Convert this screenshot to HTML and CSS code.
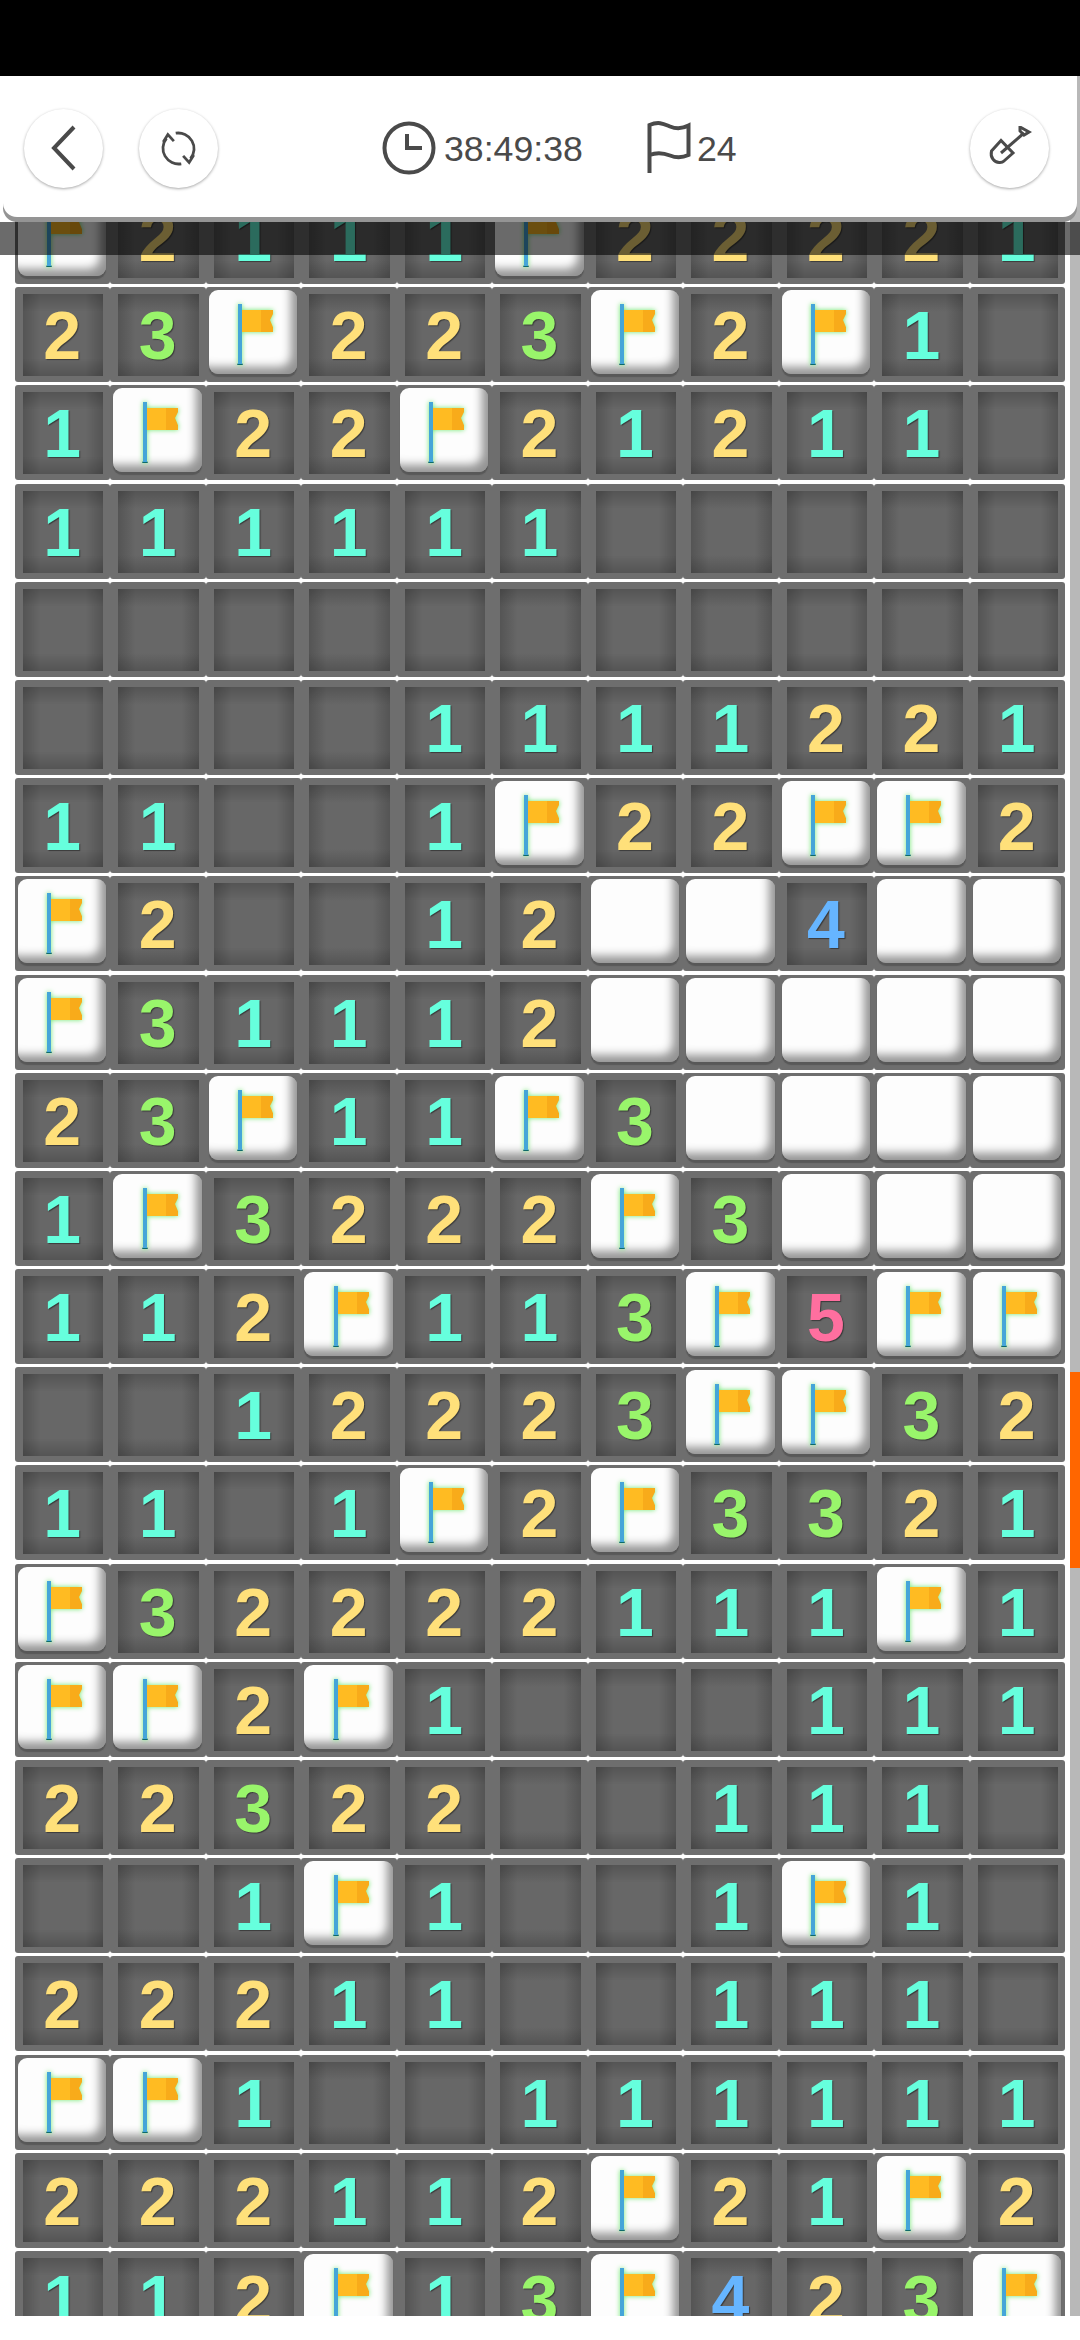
FILE: index.html
```html
<!DOCTYPE html>
<html lang="en">
<head>
  <meta charset="UTF-8" />
  <meta name="viewport" content="width=device-width, initial-scale=1.0"/>
  <title>Minesweeper</title>
  <link rel="stylesheet" href="styles.css">
</head>
<body>
  <svg class="defs" width="0" height="0">
    <symbol id="flag" viewBox="0 0 40 64">
      <path d="M4 62 L6 58 L8 58 L10 62 Z" fill="#0d6a6a"/>
      <rect x="5" y="1" width="4" height="60" fill="#45a5d8"/>
      <path d="M9 7 H30 V29 H9 Z" fill="#ffbb22"/>
      <path d="M29 7 H43 L38 17 L43 29 H29 Z" fill="#f8ab1a" transform="translate(-1 0)"/>
    </symbol>
  </svg>

  <div class="status-bar"></div>

  <main class="viewport">
    <header class="topbar">
      <button class="round-btn">
        <svg width="28" height="48" viewBox="0 0 28 48"><path d="M24 3 L4 24 L24 45"/></svg>
      </button>
      <button class="round-btn">
        <svg class="thin" width="37" height="37" viewBox="0 0 40 40">
          <path d="M17 3.5 A17 17 0 0 1 33 31"/><path d="M25 28 L31.5 35 L36.5 27"/>
          <path d="M23 36.5 A17 17 0 0 1 7 9"/><path d="M15 12 L8.5 5 L3.5 13"/>
        </svg>
      </button>
      <div class="stats">
        <svg width="54" height="54" viewBox="0 0 54 54"><circle cx="27" cy="27" r="24.5"/><path d="M25 13 V27 H40"/></svg>
        <span class="stat-text">38:49:38</span>
        <svg class="stat-flag" width="44" height="54" viewBox="0 0 44 54"><path d="M2.500 52 V4 C12 0 17 3 23 5.500 S35 8 41.500 4.500 V34 C35 37 29 37 23 34.500 S10 31 2.500 34"/></svg>
        <span class="stat-text flag-count">24</span>
      </div>
      <button class="round-btn tool">
        <svg class="thin" width="44" height="44" viewBox="0 0 44 44">
          <path d="M36 7 L13 27"/>
          <path d="M32 1 L41 6 L36 9 L32 5 Z"/>
          <path d="M13 14.500 L3.500 25 C2 31 6 37 12 36.500 C14 36.500 15 36 16 35 L25 27 Z"/>
        </svg>
      </button>
    </header>

    <div class="scrollbar"><div class="thumb"></div></div>

    <section class="board">
      <div class="cell closed"><div class="cap"><svg class="flag"><use href="#flag"/></svg></div></div><div class="cell n2">2</div><div class="cell n1">1</div><div class="cell n1">1</div><div class="cell n1">1</div><div class="cell closed"><div class="cap"><svg class="flag"><use href="#flag"/></svg></div></div><div class="cell n2">2</div><div class="cell n2">2</div><div class="cell n2">2</div><div class="cell n2">2</div><div class="cell n1">1</div>

      <div class="cell n2">2</div><div class="cell n3">3</div><div class="cell closed"><div class="cap"><svg class="flag"><use href="#flag"/></svg></div></div><div class="cell n2">2</div><div class="cell n2">2</div><div class="cell n3">3</div><div class="cell closed"><div class="cap"><svg class="flag"><use href="#flag"/></svg></div></div><div class="cell n2">2</div><div class="cell closed"><div class="cap"><svg class="flag"><use href="#flag"/></svg></div></div><div class="cell n1">1</div><div class="cell"></div>

      <div class="cell n1">1</div><div class="cell closed"><div class="cap"><svg class="flag"><use href="#flag"/></svg></div></div><div class="cell n2">2</div><div class="cell n2">2</div><div class="cell closed"><div class="cap"><svg class="flag"><use href="#flag"/></svg></div></div><div class="cell n2">2</div><div class="cell n1">1</div><div class="cell n2">2</div><div class="cell n1">1</div><div class="cell n1">1</div><div class="cell"></div>

      <div class="cell n1">1</div><div class="cell n1">1</div><div class="cell n1">1</div><div class="cell n1">1</div><div class="cell n1">1</div><div class="cell n1">1</div><div class="cell"></div><div class="cell"></div><div class="cell"></div><div class="cell"></div><div class="cell"></div>

      <div class="cell"></div><div class="cell"></div><div class="cell"></div><div class="cell"></div><div class="cell"></div><div class="cell"></div><div class="cell"></div><div class="cell"></div><div class="cell"></div><div class="cell"></div><div class="cell"></div>

      <div class="cell"></div><div class="cell"></div><div class="cell"></div><div class="cell"></div><div class="cell n1">1</div><div class="cell n1">1</div><div class="cell n1">1</div><div class="cell n1">1</div><div class="cell n2">2</div><div class="cell n2">2</div><div class="cell n1">1</div>

      <div class="cell n1">1</div><div class="cell n1">1</div><div class="cell"></div><div class="cell"></div><div class="cell n1">1</div><div class="cell closed"><div class="cap"><svg class="flag"><use href="#flag"/></svg></div></div><div class="cell n2">2</div><div class="cell n2">2</div><div class="cell closed"><div class="cap"><svg class="flag"><use href="#flag"/></svg></div></div><div class="cell closed"><div class="cap"><svg class="flag"><use href="#flag"/></svg></div></div><div class="cell n2">2</div>

      <div class="cell closed"><div class="cap"><svg class="flag"><use href="#flag"/></svg></div></div><div class="cell n2">2</div><div class="cell"></div><div class="cell"></div><div class="cell n1">1</div><div class="cell n2">2</div><div class="cell closed"><div class="cap"></div></div><div class="cell closed"><div class="cap"></div></div><div class="cell n4">4</div><div class="cell closed"><div class="cap"></div></div><div class="cell closed"><div class="cap"></div></div>

      <div class="cell closed"><div class="cap"><svg class="flag"><use href="#flag"/></svg></div></div><div class="cell n3">3</div><div class="cell n1">1</div><div class="cell n1">1</div><div class="cell n1">1</div><div class="cell n2">2</div><div class="cell closed"><div class="cap"></div></div><div class="cell closed"><div class="cap"></div></div><div class="cell closed"><div class="cap"></div></div><div class="cell closed"><div class="cap"></div></div><div class="cell closed"><div class="cap"></div></div>

      <div class="cell n2">2</div><div class="cell n3">3</div><div class="cell closed"><div class="cap"><svg class="flag"><use href="#flag"/></svg></div></div><div class="cell n1">1</div><div class="cell n1">1</div><div class="cell closed"><div class="cap"><svg class="flag"><use href="#flag"/></svg></div></div><div class="cell n3">3</div><div class="cell closed"><div class="cap"></div></div><div class="cell closed"><div class="cap"></div></div><div class="cell closed"><div class="cap"></div></div><div class="cell closed"><div class="cap"></div></div>

      <div class="cell n1">1</div><div class="cell closed"><div class="cap"><svg class="flag"><use href="#flag"/></svg></div></div><div class="cell n3">3</div><div class="cell n2">2</div><div class="cell n2">2</div><div class="cell n2">2</div><div class="cell closed"><div class="cap"><svg class="flag"><use href="#flag"/></svg></div></div><div class="cell n3">3</div><div class="cell closed"><div class="cap"></div></div><div class="cell closed"><div class="cap"></div></div><div class="cell closed"><div class="cap"></div></div>

      <div class="cell n1">1</div><div class="cell n1">1</div><div class="cell n2">2</div><div class="cell closed"><div class="cap"><svg class="flag"><use href="#flag"/></svg></div></div><div class="cell n1">1</div><div class="cell n1">1</div><div class="cell n3">3</div><div class="cell closed"><div class="cap"><svg class="flag"><use href="#flag"/></svg></div></div><div class="cell n5">5</div><div class="cell closed"><div class="cap"><svg class="flag"><use href="#flag"/></svg></div></div><div class="cell closed"><div class="cap"><svg class="flag"><use href="#flag"/></svg></div></div>

      <div class="cell"></div><div class="cell"></div><div class="cell n1">1</div><div class="cell n2">2</div><div class="cell n2">2</div><div class="cell n2">2</div><div class="cell n3">3</div><div class="cell closed"><div class="cap"><svg class="flag"><use href="#flag"/></svg></div></div><div class="cell closed"><div class="cap"><svg class="flag"><use href="#flag"/></svg></div></div><div class="cell n3">3</div><div class="cell n2">2</div>

      <div class="cell n1">1</div><div class="cell n1">1</div><div class="cell"></div><div class="cell n1">1</div><div class="cell closed"><div class="cap"><svg class="flag"><use href="#flag"/></svg></div></div><div class="cell n2">2</div><div class="cell closed"><div class="cap"><svg class="flag"><use href="#flag"/></svg></div></div><div class="cell n3">3</div><div class="cell n3">3</div><div class="cell n2">2</div><div class="cell n1">1</div>

      <div class="cell closed"><div class="cap"><svg class="flag"><use href="#flag"/></svg></div></div><div class="cell n3">3</div><div class="cell n2">2</div><div class="cell n2">2</div><div class="cell n2">2</div><div class="cell n2">2</div><div class="cell n1">1</div><div class="cell n1">1</div><div class="cell n1">1</div><div class="cell closed"><div class="cap"><svg class="flag"><use href="#flag"/></svg></div></div><div class="cell n1">1</div>

      <div class="cell closed"><div class="cap"><svg class="flag"><use href="#flag"/></svg></div></div><div class="cell closed"><div class="cap"><svg class="flag"><use href="#flag"/></svg></div></div><div class="cell n2">2</div><div class="cell closed"><div class="cap"><svg class="flag"><use href="#flag"/></svg></div></div><div class="cell n1">1</div><div class="cell"></div><div class="cell"></div><div class="cell"></div><div class="cell n1">1</div><div class="cell n1">1</div><div class="cell n1">1</div>

      <div class="cell n2">2</div><div class="cell n2">2</div><div class="cell n3">3</div><div class="cell n2">2</div><div class="cell n2">2</div><div class="cell"></div><div class="cell"></div><div class="cell n1">1</div><div class="cell n1">1</div><div class="cell n1">1</div><div class="cell"></div>

      <div class="cell"></div><div class="cell"></div><div class="cell n1">1</div><div class="cell closed"><div class="cap"><svg class="flag"><use href="#flag"/></svg></div></div><div class="cell n1">1</div><div class="cell"></div><div class="cell"></div><div class="cell n1">1</div><div class="cell closed"><div class="cap"><svg class="flag"><use href="#flag"/></svg></div></div><div class="cell n1">1</div><div class="cell"></div>

      <div class="cell n2">2</div><div class="cell n2">2</div><div class="cell n2">2</div><div class="cell n1">1</div><div class="cell n1">1</div><div class="cell"></div><div class="cell"></div><div class="cell n1">1</div><div class="cell n1">1</div><div class="cell n1">1</div><div class="cell"></div>

      <div class="cell closed"><div class="cap"><svg class="flag"><use href="#flag"/></svg></div></div><div class="cell closed"><div class="cap"><svg class="flag"><use href="#flag"/></svg></div></div><div class="cell n1">1</div><div class="cell"></div><div class="cell"></div><div class="cell n1">1</div><div class="cell n1">1</div><div class="cell n1">1</div><div class="cell n1">1</div><div class="cell n1">1</div><div class="cell n1">1</div>

      <div class="cell n2">2</div><div class="cell n2">2</div><div class="cell n2">2</div><div class="cell n1">1</div><div class="cell n1">1</div><div class="cell n2">2</div><div class="cell closed"><div class="cap"><svg class="flag"><use href="#flag"/></svg></div></div><div class="cell n2">2</div><div class="cell n1">1</div><div class="cell closed"><div class="cap"><svg class="flag"><use href="#flag"/></svg></div></div><div class="cell n2">2</div>

      <div class="cell n1">1</div><div class="cell n1">1</div><div class="cell n2">2</div><div class="cell closed"><div class="cap"><svg class="flag"><use href="#flag"/></svg></div></div><div class="cell n1">1</div><div class="cell n3">3</div><div class="cell closed"><div class="cap"><svg class="flag"><use href="#flag"/></svg></div></div><div class="cell n4">4</div><div class="cell n2">2</div><div class="cell n3">3</div><div class="cell closed"><div class="cap"><svg class="flag"><use href="#flag"/></svg></div></div>
    </section>
  </main>
</body>
</html>
```

FILE: styles.css
```css
* {
  box-sizing: border-box;
}
body {
  margin: 0;
  width: 1080px;
  height: 2340px;
  overflow: hidden;
  background: #fff;
  font-family: "Liberation Sans", Arial, sans-serif;
}
.defs {
  position: absolute;
}
.status-bar {
  height: 76px;
  background: #000;
}
.viewport {
  position: relative;
  height: 2240px;
  overflow: hidden;
  padding: 113px 15px 0;
}

/* header floats over the board */
.topbar {
  position: absolute;
  top: 0;
  left: 3px;
  right: 3px;
  height: 141px;
  z-index: 3;
  display: flex;
  align-items: center;
  padding: 3px 28px 0 21px;
  background: #fff;
  border-radius: 0 0 14px 14px;
  box-shadow: 0 5px 0 #949494;
}
/* dim band right under the header */
.topbar::after {
  content: "";
  position: absolute;
  top: 146px;
  left: -3px;
  right: -3px;
  height: 33px;
  background: rgba(0, 0, 0, 0.58);
}
.round-btn {
  width: 79px;
  height: 79px;
  padding: 0;
  margin-right: 36px;
  display: flex;
  align-items: center;
  justify-content: center;
  background: #fff;
  border: none;
  border-radius: 50%;
  box-shadow: 0 1px 3px rgba(0, 0, 0, 0.35);
}
.round-btn svg, .stats svg {
  fill: none;
  stroke: #4a4a4a;
  stroke-width: 4;
}
.round-btn svg.thin {
  stroke-width: 3;
}
.round-btn.tool {
  margin: 0 0 0 auto;
}
.stats {
  display: flex;
  align-items: center;
  margin-left: 128px;
  color: #4a4a4a;
  font-size: 35.7px;
}
.stat-text {
  margin-left: 8px;
  padding-top: 2px;
}
.stat-flag {
  margin-left: 64px;
}
.flag-count {
  margin-left: 6px;
}

.scrollbar {
  position: absolute;
  top: 0;
  right: 0;
  bottom: 0;
  width: 10px;
  background: #b8b8b8;
}
.thumb {
  position: absolute;
  top: 1296px;
  left: 0;
  right: 0;
  height: 196px;
  background: #ff6600;
}

.board {
  width: 1050px;
  display: grid;
  grid-template-columns: repeat(11, 1fr);
  grid-auto-rows: 95px;
  row-gap: 3.2px;
}
.cell {
  display: flex;
  align-items: center;
  justify-content: center;
  padding: 7px 7px 6px 8px;
  border-radius: 3px;
  background:
    linear-gradient(90deg, rgba(0, 0, 0, 0.18), transparent 22%, transparent 78%, rgba(0, 0, 0, 0.18)) content-box,
    linear-gradient(rgba(0, 0, 0, 0.18), transparent 22%, transparent 78%, rgba(0, 0, 0, 0.18)) content-box,
    linear-gradient(#676767, #676767) content-box,
    #6e6e6e;
  font-size: 68px;
  font-weight: bold;
  line-height: 1;
  text-indent: -2px;
  text-shadow: 1px 1px 1px #3a3a3a;
}
.n1 { color: #66ffdd; }
.n2 { color: #ffe07a; }
.n3 { color: #99f56b; }
.n4 { color: #66b5ff; }
.n5 { color: #ff6f9f; }

.cell.closed {
  padding: 3px 4px 8px 3px;
  background: #6e6e6e;
}
.cap {
  flex: 1;
  align-self: stretch;
  display: flex;
  align-items: center;
  justify-content: center;
  background: #fdfdfd;
  border-radius: 9px;
  box-shadow: inset -9px -10px 10px -3px rgba(0, 0, 0, 0.42), 0 3px 1px #585858;
}
.flag {
  width: 40px;
  height: 64px;
  margin-top: 6px;
  filter: drop-shadow(0 0 2.5px #6ee86e);
}
```
